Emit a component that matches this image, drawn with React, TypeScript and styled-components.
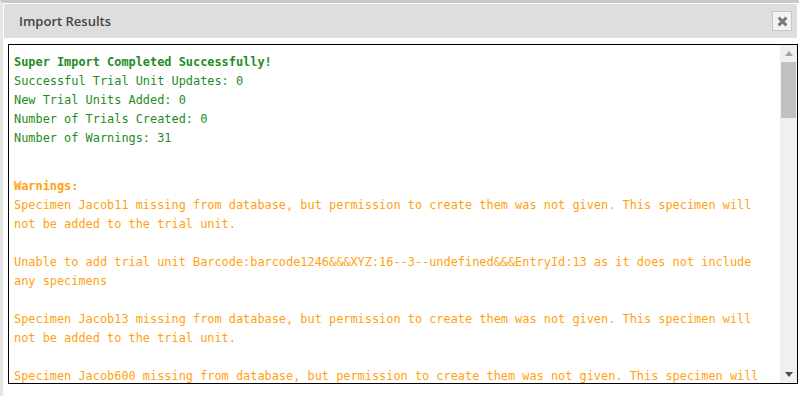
import React from "react";
import styled, { createGlobalStyle } from "styled-components";

const GlobalStyle = createGlobalStyle`
  html, body {
    margin: 0;
    padding: 0;
    background: #ffffff;
  }
  body {
    width: 799px;
    height: 396px;
    overflow: hidden;
  }
`;

const Dialog = styled.div`
  width: 799px;
  height: 396px;
  box-sizing: border-box;
  border-top: 3px solid #c9c9c9;
  border-left: 3px solid #e6e6e6;
  background: #ffffff;
  display: flex;
  flex-direction: column;
`;

const Header = styled.div`
  margin: 1px 2px 0 1px;
  height: 34px;
  background: #dedede;
  display: flex;
  align-items: center;
  justify-content: space-between;
  padding: 0 5px 0 15px;
`;

const Title = styled.span`
  font-family: "Open Sans", "Noto Sans", sans-serif;
  font-size: 13px;
  font-weight: 600;
  color: #444444;
`;

const CloseButton = styled.button`
  width: 20px;
  height: 20px;
  padding: 0;
  border: 1px solid #c6c6c6;
  background: #f3f3f3;
  display: flex;
  align-items: center;
  justify-content: center;
  cursor: pointer;
`;

const Body = styled.div`
  padding: 6px 0 0 5px;
  display: flex;
`;

const ResultsBox = styled.div`
  width: 790px;
  height: 340px;
  box-sizing: border-box;
  border: 1px solid #000000;
  display: flex;
`;

const Log = styled.div`
  flex: 1;
  overflow: hidden;
  padding: 8px 14px 0 5px;
  font-family: "DejaVu Sans Mono", "Liberation Mono", monospace;
  font-size: 11.9px;
  line-height: 19px;
`;

const Line = styled.div<{ $tone: "ok" | "warn"; $bold?: boolean }>`
  color: ${(p) => (p.$tone === "ok" ? "#1e8c1e" : "#ffa20f")};
  font-weight: ${(p) => (p.$bold ? 700 : 400)};
  white-space: pre-wrap;
`;

const Summary = styled.div`
  margin-bottom: 29px;
`;

const Warning = styled(Line)`
  margin-bottom: 19px;
`;

const ScrollRail = styled.div`
  width: 17px;
  background: #f0f0f0;
  display: flex;
  flex-direction: column;
  align-items: center;
`;

const ArrowCell = styled.div`
  height: 17px;
  width: 17px;
  display: flex;
  align-items: center;
  justify-content: center;
`;

const Thumb = styled.div`
  width: 15px;
  height: 56px;
  background: #c1c1c1;
`;

const Track = styled.div`
  flex: 1;
`;

const summary = [
  "Successful Trial Unit Updates: 0",
  "New Trial Units Added: 0",
  "Number of Trials Created: 0",
  "Number of Warnings: 31",
];

const missing = (name: string) =>
  `Specimen ${name} missing from database, but permission to create them was not given. This specimen will not be added to the trial unit.`;

const warnings = [
  missing("Jacob11"),
  "Unable to add trial unit Barcode:barcode1246&&&XYZ:16--3--undefined&&&EntryId:13 as it does not include any specimens",
  missing("Jacob13"),
  missing("Jacob600"),
  missing("Jacob601"),
];

const Arrow = ({ up }: { up?: boolean }) => (
  <svg width="8" height="5" viewBox="0 0 8 5">
    <path d={up ? "M0 5 L4 0 L8 5 Z" : "M0 0 L4 5 L8 0 Z"} fill={up ? "#a3a3a3" : "#505050"} />
  </svg>
);

const App = () => (
  <>
    <GlobalStyle />
    <Dialog>
      <Header>
        <Title>Import Results</Title>
        <CloseButton aria-label="close">
          <svg width="11" height="11" viewBox="0 0 11 11">
            <path d="M1.6 1.6 L9.4 9.4 M9.4 1.6 L1.6 9.4" stroke="#7a7a7a" strokeWidth="3" />
          </svg>
        </CloseButton>
      </Header>
      <Body>
        <ResultsBox>
          <Log>
            <Summary>
              <Line $tone="ok" $bold>
                Super Import Completed Successfully!
              </Line>
              {summary.map((s) => (
                <Line key={s} $tone="ok">
                  {s}
                </Line>
              ))}
            </Summary>
            <Line $tone="warn" $bold>
              Warnings:
            </Line>
            {warnings.map((w, i) => (
              <Warning key={i} $tone="warn">
                {w}
              </Warning>
            ))}
          </Log>
          <ScrollRail>
            <ArrowCell>
              <Arrow up />
            </ArrowCell>
            <Thumb />
            <Track />
            <ArrowCell>
              <Arrow />
            </ArrowCell>
          </ScrollRail>
        </ResultsBox>
      </Body>
    </Dialog>
  </>
);

export default App;
